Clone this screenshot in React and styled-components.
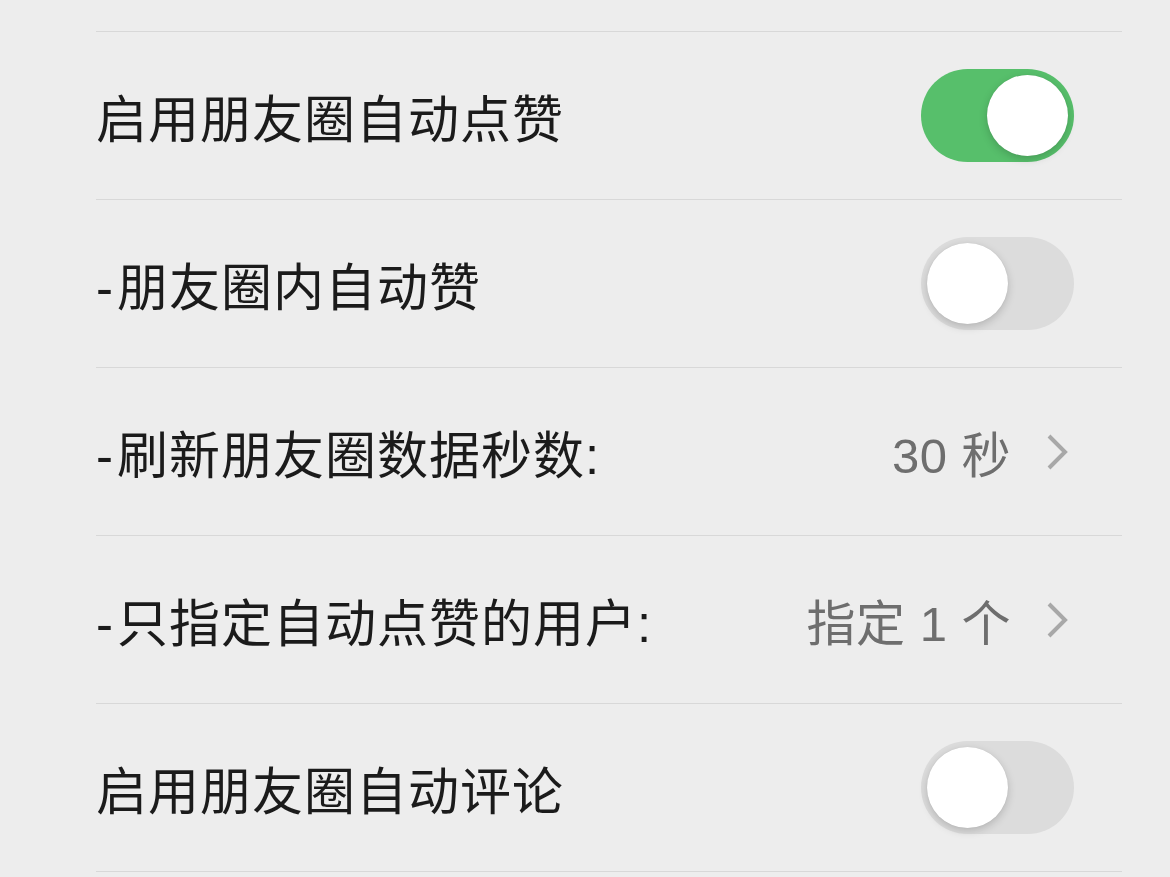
import React, { useState } from "react";
import styled, { createGlobalStyle } from "styled-components";

const GlobalStyle = createGlobalStyle`
  html, body {
    margin: 0;
    padding: 0;
    background: #ededed;
  }
  body {
    font-family: "Liberation Sans", "Noto Sans CJK SC", sans-serif;
  }
`;

const Page = styled.div`
  width: 1170px;
  height: 877px;
  overflow: hidden;
  background: #ededed;
  padding-top: 31px;
  box-sizing: border-box;
`;

const List = styled.div`
  margin-left: 96px;
  margin-right: 48px;
  border-top: 1.5px solid #d8d8d8;
`;

const Row = styled.div`
  height: 167px;
  display: flex;
  align-items: center;
  justify-content: space-between;
  border-bottom: 1.5px solid #d8d8d8;
  padding-right: 48px;
`;

const Label = styled.span`
  font-size: 51px;
  color: #1b1b1b;
  letter-spacing: 1px;
`;

const Dash = styled.span`
  margin-right: 3px;
`;

const Value = styled.div`
  display: flex;
  align-items: center;
  gap: 34px;
  margin-right: 5px;
  font-size: 49px;
  color: #6e6e6e;
  letter-spacing: 0.5px;
`;

const Track = styled.button`
  width: 153px;
  height: 93px;
  border-radius: 47px;
  border: none;
  padding: 0 6px;
  display: flex;
  align-items: center;
  justify-content: ${(p) => (p.$on ? "flex-end" : "flex-start")};
  background: ${(p) => (p.$on ? "#57bf6b" : "#dcdcdc")};
  cursor: pointer;
`;

const Knob = styled.span`
  width: 81px;
  height: 81px;
  border-radius: 50%;
  background: #ffffff;
  box-shadow: 0 3px 8px rgba(0, 0, 0, 0.18), 0 0 1px rgba(0, 0, 0, 0.12);
`;

const Chevron = () => (
  <svg width="24" height="40" viewBox="0 0 24 40">
    <path d="M4 4 L20 20 L4 36" fill="none" stroke="#a8a8a8" strokeWidth="4" strokeLinecap="butt" />
  </svg>
);

const Toggle = ({ initial }) => {
  const [on, setOn] = useState(initial);
  return (
    <Track $on={on} onClick={() => setOn(!on)}>
      <Knob />
    </Track>
  );
};

const items = [
  { label: "启用朋友圈自动点赞", toggle: true, on: true },
  { label: "朋友圈内自动赞", sub: true, toggle: true, on: false },
  { label: "刷新朋友圈数据秒数:", sub: true, value: "30 秒" },
  { label: "只指定自动点赞的用户:", sub: true, value: "指定 1 个" },
  { label: "启用朋友圈自动评论", toggle: true, on: false },
];

const App = () => (
  <>
    <GlobalStyle />
    <Page>
      <List>
        {items.map((it) => (
          <Row key={it.label}>
            <Label>
              {it.sub && <Dash>-</Dash>}
              {it.label}
            </Label>
            {it.toggle ? (
              <Toggle initial={it.on} />
            ) : (
              <Value>
                <span>{it.value}</span>
                <Chevron />
              </Value>
            )}
          </Row>
        ))}
      </List>
    </Page>
  </>
);

export default App;
